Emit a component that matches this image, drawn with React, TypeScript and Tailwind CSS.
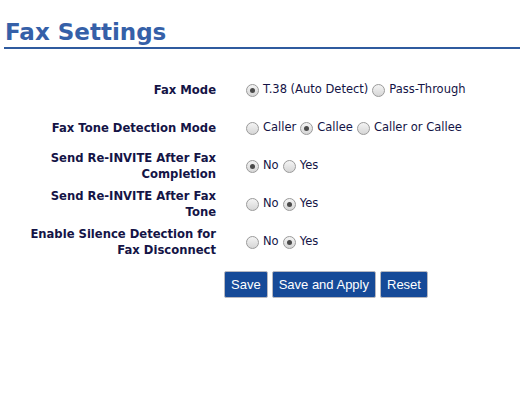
const rows: { label: string[]; options: string[]; checked: number }[] = [
  { label: ["Fax Mode"], options: ["T.38 (Auto Detect)", "Pass-Through"], checked: 0 },
  { label: ["Fax Tone Detection Mode"], options: ["Caller", "Callee", "Caller or Callee"], checked: 1 },
  { label: ["Send Re-INVITE After Fax", "Completion"], options: ["No", "Yes"], checked: 0 },
  { label: ["Send Re-INVITE After Fax", "Tone"], options: ["No", "Yes"], checked: 1 },
  { label: ["Enable Silence Detection for", "Fax Disconnect"], options: ["No", "Yes"], checked: 1 },
];

function Radio({ on }: { on: boolean }) {
  return (
    <span className="flex h-[13px] w-[13px] shrink-0 items-center justify-center rounded-full border border-[#9a9a9a] bg-gradient-to-b from-[#f4f4f4] to-[#d6d6d6]">
      {on && <span className="h-[5px] w-[5px] rounded-full bg-[#4a4a4a]" />}
    </span>
  );
}

export default function App() {
  return (
    <div className="h-[414px] w-[520px] bg-white font-['DejaVu_Sans',Verdana,sans-serif]">
      <h1 className="pl-[5px] pt-[17px] text-[23px] font-bold leading-[30px] text-[#3560a8]">Fax Settings</h1>
      <div className="ml-[4px] h-[2px] bg-[#2f5b9f]" />
      <div className="pt-[22px]">
        {rows.map((r, i) => (
          <div key={i} className="flex h-[38px] items-center">
            <div className="w-[216px] shrink-0 text-right text-[11.6px] font-bold leading-[16px] text-[#141446]">
              {r.label.map((l) => (
                <div key={l}>{l}</div>
              ))}
            </div>
            <div className="flex items-center pl-[30px] text-[11.5px] text-[#141446]">
              {r.options.map((o, j) => (
                <label key={o} className="mr-[4px] flex items-center gap-[4px]">
                  <Radio on={j === r.checked} />
                  <span>{o}</span>
                </label>
              ))}
            </div>
          </div>
        ))}
      </div>
      <div className="flex gap-[4px] pl-[224px] pt-[10px] font-['Liberation_Sans',Arial,sans-serif]">
        {["Save", "Save and Apply", "Reset"].map((b) => (
          <button
            key={b}
            className="h-[27px] rounded-[2px] border border-[#b8b8c0] bg-[#164a98] px-[6px] text-[13px] text-white"
          >
            {b}
          </button>
        ))}
      </div>
    </div>
  );
}
